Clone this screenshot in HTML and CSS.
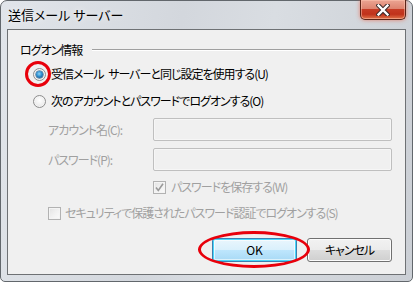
FILE: index.html
```html
<!DOCTYPE html>
<html lang="ja">
<head>
<meta charset="utf-8">
<title>送信メール サーバー</title>
<link rel="stylesheet" href="styles.css">
</head>
<body>
<div class="window">
  <div class="titlebar">
    <span class="title">送信メール サーバー</span>
    <div class="close">
      <svg width="14" height="12" viewBox="0 0 14 12">
        <path d="M2.5 1.5 L11.5 10.5 M11.5 1.5 L2.5 10.5" stroke="#3a2a2a" stroke-width="4.4" stroke-linecap="square" fill="none"/>
        <path d="M2.5 1.5 L11.5 10.5 M11.5 1.5 L2.5 10.5" stroke="#ffffff" stroke-width="2.4" stroke-linecap="square" fill="none"/>
      </svg>
    </div>
  </div>
  <div class="client">
    <div class="group-head"><span class="group-label">ログオン情報</span><span class="rule"></span></div>
    <div class="radio-row first">
      <span class="radio checked"><span class="dot"></span></span>
      <span class="text">受信メール サーバーと同じ設定を使用する(U)</span>
    </div>
    <div class="radio-row">
      <span class="radio"></span>
      <span class="text">次のアカウントとパスワードでログオンする(O)</span>
    </div>
    <div class="field first">
      <span class="flabel">アカウント名(C):</span>
      <span class="input"></span>
    </div>
    <div class="field">
      <span class="flabel">パスワード(P):</span>
      <span class="input"></span>
    </div>
    <div class="check-row save">
      <span class="check checked">
        <svg width="11" height="11" viewBox="0 0 11 11"><path d="M2 5.5 L4.3 8.5 L9 1.8" stroke="#9a9a9a" stroke-width="1.6" fill="none"/></svg>
      </span>
      <span class="text disabled">パスワードを保存する(W)</span>
    </div>
    <div class="check-row spa">
      <span class="check"></span>
      <span class="text disabled">セキュリティで保護されたパスワード認証でログオンする(S)</span>
    </div>
    <div class="buttons">
      <button class="btn default">OK</button>
      <button class="btn">キャンセル</button>
    </div>
  </div>
  <div class="mark mark-radio"></div>
  <div class="mark mark-ok"></div>
</div>
</body>
</html>
```

FILE: styles.css
```css
* { box-sizing: border-box; }
html, body {
  margin: 0;
  padding: 0;
  background: #ffffff;
}
body {
  width: 413px;
  height: 282px;
  overflow: hidden;
  font-family: "Noto Sans CJK JP", "Noto Sans", sans-serif;
  font-size: 12px;
  font-feature-settings: "palt";
  letter-spacing: -1px;
  word-spacing: 3px;
  color: #000;
}
.window {
  position: relative;
  width: 413px;
  height: 282px;
  border: 1px solid #62676c;
  border-radius: 7px 7px 5px 5px;
  background: linear-gradient(100deg, #e1e5ea 0%, #d3d7dd 40%, #d9dde2 60%, #cbcfd5 100%);
  padding: 0 6px 6px 6px;
  display: flex;
  flex-direction: column;
}
.titlebar {
  height: 28px;
  flex: none;
  display: flex;
  justify-content: space-between;
  align-items: flex-start;
}
.title {
  margin-top: 5px;
  padding-left: 1px;
  line-height: 18px;
  font-size: 13px;
  letter-spacing: 0;
  word-spacing: 0;
  color: #000;
  text-shadow: 0 0 6px rgba(255,255,255,0.9);
}
.close {
  margin-top: -1px;
  margin-right: 0;
  width: 46px;
  height: 20px;
  border: 1px solid #5b2418;
  border-top: none;
  border-radius: 0 0 5px 5px;
  background: linear-gradient(#eba593 0%, #de8470 45%, #c63b24 50%, #c0321b 75%, #e0744a 100%);
  box-shadow: 0 0 4px rgba(240, 90, 60, 0.7), inset 0 0 0 1px rgba(255,200,180,0.5);
  display: flex;
  align-items: center;
  justify-content: center;
}
.client {
  flex: 1;
  border: 1px solid #6e7174;
  background: #f0f0f0;
  padding: 0 13px 0 0;
  display: flex;
  flex-direction: column;
  align-items: stretch;
}
.group-head {
  margin-top: 12px;
  height: 16px;
  padding-left: 12px;
  display: flex;
  align-items: center;
  line-height: 16px;
}
.group-label { flex: none; }
.rule {
  flex: 1;
  height: 1px;
  margin-left: 10px;
  margin-right: 2px;
  margin-top: -1px;
  background: #a0a0a0;
  box-shadow: 0 1px 0 #ffffff;
}
.radio-row {
  height: 18px;
  padding-left: 25px;
  display: flex;
  align-items: center;
  margin-top: 9px;
  line-height: 18px;
}
.radio-row.first { margin-top: 7px; }
.radio {
  width: 13px;
  height: 13px;
  border-radius: 50%;
  border: 1px solid #8d8d8d;
  background: radial-gradient(circle at 50% 40%, #ffffff 0%, #f0f0f0 50%, #d6d6d6 100%);
  box-shadow: inset 0 0 0 1px #f4f4f4;
  display: flex;
  align-items: center;
  justify-content: center;
  margin-right: 5px;
  flex: none;
}
.radio .dot {
  width: 7px;
  height: 7px;
  border-radius: 50%;
  background: radial-gradient(circle at 45% 40%, #8ed3f5 0%, #2e8fd0 45%, #0d3f6e 100%);
  box-shadow: 0 0 0 0.5px #1a4a78;
}
.field {
  display: flex;
  align-items: center;
  height: 23px;
  margin-top: 7px;
  padding-left: 40px;
}
.field.first { margin-top: 8px; }
.flabel {
  width: 105px;
  flex: none;
  color: #a0a0a0;
  line-height: 16px;
  padding-top: 1px;
}
.input {
  flex: 1;
  height: 23px;
  border: 1px solid #bfbfbf;
  border-radius: 2px;
  background: #f0f0f0;
  box-shadow: inset 0 0 0 1px #f6f6f6;
}
.check-row {
  display: flex;
  align-items: center;
  height: 14px;
  line-height: 14px;
}
.check-row.save { margin-top: 9px; padding-left: 145px; }
.check-row.spa { margin-top: 12px; padding-left: 40px; }
.check {
  width: 13px;
  height: 13px;
  border: 1px solid #b2b2b2;
  background: linear-gradient(135deg, #e2e2e2 0%, #f1f1f1 50%, #fbfbfb 100%);
  box-shadow: inset 0 0 0 1px #f4f4f4;
  margin-right: 5px;
  flex: none;
  display: flex;
  align-items: center;
  justify-content: center;
}
.check-row.spa .check { margin-right: 4px; }
.check svg { display: block; }
.text.disabled { color: #a0a0a0; }
.buttons {
  margin-top: 18px;
  display: flex;
  justify-content: flex-end;
  gap: 10px;
}
.btn {
  width: 85px;
  height: 24px;
  padding: 0;
  font-family: inherit;
  font-size: 12px;
  font-feature-settings: "palt";
  letter-spacing: -1px;
  color: #000;
  border: 1px solid #707070;
  border-radius: 3px;
  background: linear-gradient(#f2f2f2 0%, #ebebeb 50%, #dddddd 51%, #cfcfcf 100%);
  box-shadow: inset 0 0 0 1px #fcfcfc;
  line-height: 20px;
}
.btn.default {
  letter-spacing: 0;
  border-color: #3c7fb1;
  background: linear-gradient(#eaf6fd 0%, #d9f0fc 50%, #bee6fd 51%, #a7d9f5 100%);
  box-shadow: inset 0 0 0 1px #48d8fb, inset 0 0 0 2px rgba(255,255,255,0.6);
}
.mark {
  position: absolute;
  border: 3px solid #e8000b;
  border-radius: 50%;
  pointer-events: none;
}
.mark-radio {
  left: 24px;
  top: 60px;
  width: 26px;
  height: 26px;
}
.mark-ok {
  left: 197px;
  top: 230px;
  width: 112px;
  height: 37px;
}
```
